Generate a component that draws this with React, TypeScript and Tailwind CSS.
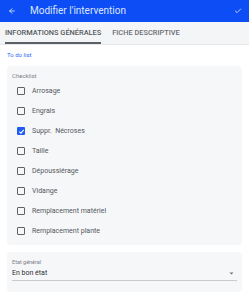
import { ArrowLeft, Check } from 'lucide-react';

const items = [
    { label: "Arrosage", checked: false },
    { label: "Engrais", checked: false },
    { label: "Suppr.  Nécroses", checked: true },
    { label: "Taille", checked: false },
    { label: "Dépoussiérage", checked: false },
    { label: "Vidange", checked: false },
    { label: "Remplacement matériel", checked: false },
    { label: "Remplacement plante", checked: false },
];

function Box({ checked }: { checked: boolean }) {
    if (checked) {
        return (
            <div className="w-[8px] h-[8px] rounded-[1px] bg-[#1f5bf5] flex items-center justify-center">
                <svg viewBox="0 0 10 10" className="w-[7px] h-[7px]">
                    <path d="M2 5.2 L4.2 7.3 L8.2 2.8" fill="none" stroke="white" strokeWidth="1.6" />
                </svg>
            </div>
        );
    }
    return <div className="w-[8px] h-[8px] rounded-[1px] border-[1.2px] border-[#5f6166]" />;
}

export default function App() {
    return (
        <div className="w-[249px] h-[300px] bg-white overflow-hidden" style={{ fontFamily: 'Roboto, "Liberation Sans", sans-serif' }}>
            {/* Top bar */}
            <div className="h-[22px] bg-[#0c4df5] flex items-center pl-[8px] pr-[7px]">
                <ArrowLeft className="w-[8px] h-[8px] text-[#e3e9ff]" strokeWidth={2.5} />
                <span className="ml-[14px] text-[10px] leading-none text-[#dde5ff]">Modifier l'intervention</span>
                <Check className="ml-auto w-[8px] h-[8px] text-[#dde5ff]" strokeWidth={2.5} />
            </div>

            {/* Tabs */}
            <div className="h-[23px] bg-[#f4f5f7] flex pl-[5px] border-b border-[#e6e7ea]">
                <div className="relative flex items-center">
                    <span className="text-[7.4px] font-medium text-[#555a60]">INFORMATIONS GÉNÉRALES</span>
                    <div className="absolute left-0 right-0 bottom-[0px] h-[2px] bg-[#5b5f66]" />
                </div>
                <div className="flex items-center ml-[11px]">
                    <span className="text-[7.4px] font-medium text-[#6a6e74]">FICHE DESCRIPTIVE</span>
                </div>
            </div>

            <div className="px-[7px]">
                <div className="pt-[5px] h-[21px] text-[6px] text-[#2f6bf2]">To do list</div>

                {/* Checklist card */}
                <div className="bg-[#f6f7f9] rounded-[4px] pl-[5px] pt-[6px] pb-[4px]">
                    <div className="text-[6px] leading-[8px] text-[#7d8187]">Checklist</div>
                    <div className="flex flex-col pt-[1px]">
                        {items.map((item) => (
                            <div key={item.label} className="h-[20px] flex items-center pl-[5px]">
                                <Box checked={item.checked} />
                                <span className="ml-[7px] text-[7px] text-[#54585e] whitespace-pre">{item.label}</span>
                            </div>
                        ))}
                    </div>
                </div>

                {/* Etat général */}
                <div className="mt-[7px] h-[40px] bg-[#f6f7f9] rounded-[4px] px-[5px] pt-[7px]">
                    <div className="text-[5.5px] leading-[7px] text-[#7d8187]">Etat général</div>
                    <div className="mt-[3px] flex items-center justify-between pb-[2px] border-b border-[#c9cbcf]">
                        <span className="text-[7px] leading-[9px] text-[#2b2e33]">En bon état</span>
                        <svg viewBox="0 0 10 10" className="w-[5px] h-[5px] mr-[3px]">
                            <path d="M1 3 L9 3 L5 7 Z" fill="#6b6f75" />
                        </svg>
                    </div>
                </div>
            </div>
        </div>
    );
}
